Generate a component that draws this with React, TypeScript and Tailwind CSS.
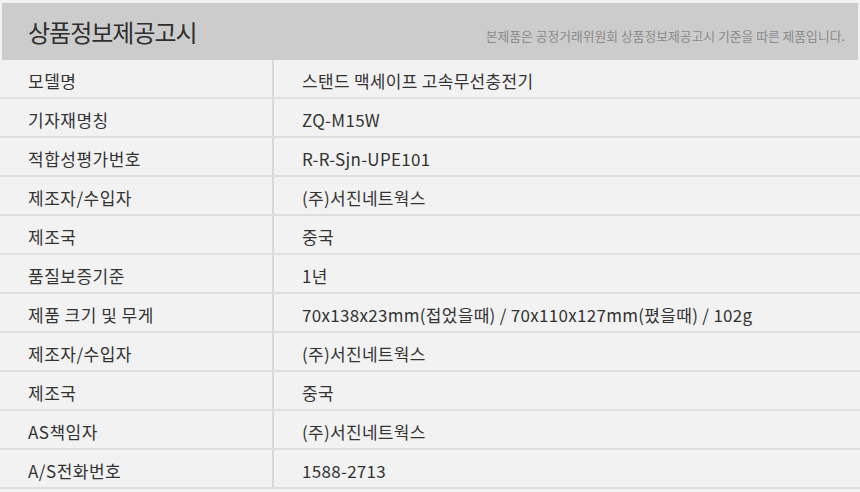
import React from 'react'

const rows: [string, string][] = [
  ['모델명', '스탠드 맥세이프 고속무선충전기'],
  ['기자재명칭', 'ZQ-M15W'],
  ['적합성평가번호', 'R-R-Sjn-UPE101'],
  ['제조자/수입자', '(주)서진네트웍스'],
  ['제조국', '중국'],
  ['품질보증기준', '1년'],
  ['제품 크기 및 무게', '70x138x23mm(접었을때) / 70x110x127mm(폈을때) / 102g'],
  ['제조자/수입자', '(주)서진네트웍스'],
  ['제조국', '중국'],
  ['AS책임자', '(주)서진네트웍스'],
  ['A/S전화번호', '1588-2713'],
]

const App = () => {
  return (
    <div
      className="w-[860px] h-[492px] bg-[#f2f2f2] overflow-hidden text-[#333]"
      style={{ fontFamily: '"Noto Sans CJK KR", "Noto Sans", sans-serif' }}
    >
      <div className="pt-[3px] px-[2px]">
        <div className="h-[57px] bg-[#cccccc] flex items-center justify-between pl-[26px] pr-[13px]">
          <span className="text-[24px] tracking-[-1px] text-[#2e2e2e]">상품정보제공고시</span>
          <span className="text-[12.8px] text-[#8a8a8a] mt-[9px]">
            본제품은 공정거래위원회 상품정보제공고시 기준을 따른 제품입니다.
          </span>
        </div>
      </div>
      <div>
        {rows.map(([label, value], i) => (
          <div key={i} className="flex h-[39px] border-b-2 border-[#dedede]">
            <div className="w-[274px] border-r-2 border-[#d8d8d8] flex items-center pt-[4px] pl-[28px] text-[17px] tracking-[0.5px]">
              {label}
            </div>
            <div className="flex-1 flex items-center pt-[4px] pl-[28px] text-[17px] tracking-[0.3px]">
              {value}
            </div>
          </div>
        ))}
      </div>
    </div>
  )
}

export default App
